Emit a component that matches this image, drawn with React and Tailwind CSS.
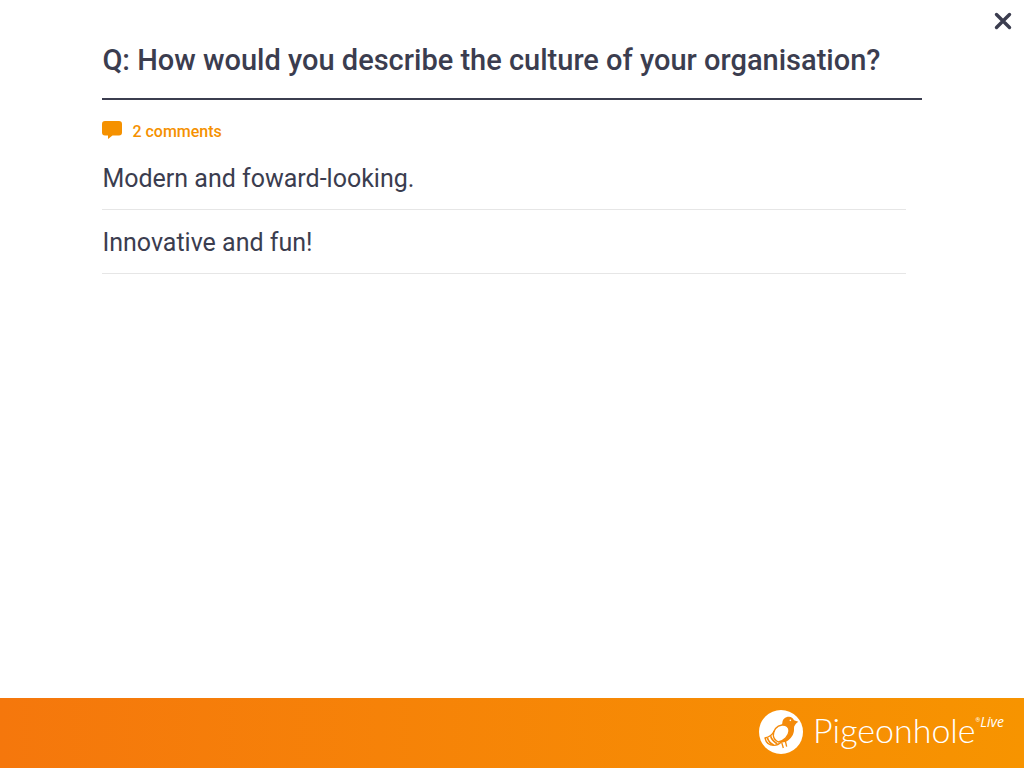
import React from 'react';

const comments = ['Modern and foward-looking.', 'Innovative and fun!'];

const CommentIcon = () => (
  <svg viewBox="0 0 20 18" className="w-5 h-[18px]" fill="currentColor" aria-hidden="true">
    <path d="M3 0h14a3 3 0 0 1 3 3v8.500a3 3 0 0 1-3 3h-6.500L6 18v-3.500H3a3 3 0 0 1-3-3V3a3 3 0 0 1 3-3z" />
  </svg>
);

const CloseIcon = () => (
  <svg viewBox="0 0 18 18" className="w-[18px] h-[18px]" fill="none" stroke="currentColor" strokeWidth="3.4" strokeLinecap="round" aria-hidden="true">
    <path d="M2.500 2.500l13 13M15.500 2.500l-13 13" />
  </svg>
);

const PigeonIcon = () => (
  <svg viewBox="31 33 132 132" className="w-11 h-11" fill="none" aria-hidden="true">
    <circle cx="97" cy="99" r="66" fill="#fff" />
    {/* Head, neck and breast */}
    <path d="M149 68l-13-4c-3-7-8-11-15-11-12 0-19 7-20 18 0 5-3 9-6 12 12-6 25 0 26 12 1 13-13 27-30 34 9 4 20 1 28-5 12-9 18-22 17-36-1-8 6-15 13-20z" fill="#f48a0a" />
    {/* Wing */}
    <path d="M74 110c-1-17 10-30 26-32 13-1 22 7 21 18-1 16-15 29-32 33-8-4-14-10-15-19z" fill="#fff" stroke="#f48a0a" strokeWidth="4" />
    {/* Tail feathers */}
    <path d="M77 96c-6 12-14 18-28 21 3 14 12 22 27 22 9 0 16-4 22-10" stroke="#f48a0a" strokeWidth="4" strokeLinejoin="round" />
    <path d="M56 116c3 10 9 17 19 22M66 112c3 10 9 16 20 23" stroke="#f48a0a" strokeWidth="5" />
    {/* Legs */}
    <path d="M99 130l5 17M110 126l4 17" stroke="#f48a0a" strokeWidth="4" />
    <circle cx="125" cy="64" r="2.500" fill="#fff" />
  </svg>
);

const App = () => {
  return (
    <div className="min-h-screen flex flex-col bg-white text-[#3b3d4f] font-[Roboto,sans-serif]">
      <header className="flex justify-end px-3 pt-3">
        <button type="button" aria-label="Close" className="cursor-pointer">
          <CloseIcon />
        </button>
      </header>

      <main className="flex-1 px-[10%]">
        <h1 className="pt-2.5 pb-[18px] border-b-2 border-[#3b3d4f] text-[29px] leading-10 font-medium">
          Q: How would you describe the culture of your organisation?
        </h1>

        <div className="flex items-center gap-2.5 mt-5 mb-0.5 text-[#f59100]">
          <span className="pb-1">
            <CommentIcon />
          </span>
          <p className="text-base leading-6 font-medium">{comments.length} comments</p>
        </div>

        <ul className="mr-4">
          {comments.map((comment) => (
            <li key={comment} className="pt-[18px] pb-[15px] border-b border-[#e6e6e6] text-[25px] leading-[30px]">
              {comment}
            </li>
          ))}
        </ul>
      </main>

      <footer className="h-[70px] flex items-start justify-end gap-2.5 px-5 pt-3 bg-linear-to-r from-[#f5770c] to-[#f79400] text-white">
        <PigeonIcon />
        <div className="flex items-start">
          <span className="font-[Lato,sans-serif] font-light text-[34px] leading-10">Pigeonhole</span>
          <span className="pt-1 text-[6px] leading-3">®</span>
          <span className="pt-1 font-['Open_Sans',sans-serif] font-medium italic text-sm leading-4">Live</span>
        </div>
      </footer>
    </div>
  );
};

export default App;
